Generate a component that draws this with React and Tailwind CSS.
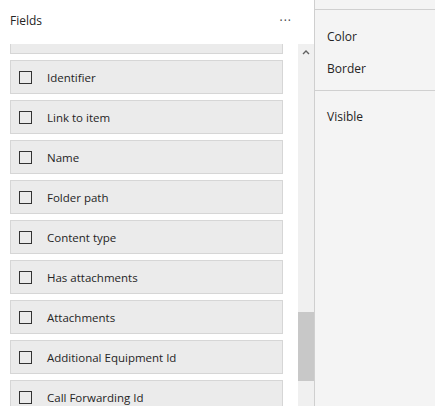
import React from 'react';

const fields = [
  '',
  'Identifier',
  'Link to item',
  'Name',
  'Folder path',
  'Content type',
  'Has attachments',
  'Attachments',
  'Additional Equipment Id',
  'Call Forwarding Id',
];

const FieldRow = ({ label }) => (
  <div className="flex items-center h-[34px] w-[273px] ml-[10px] mb-[6px] bg-[#ebebeb] border border-[#d6d6d6] shrink-0">
    <span className="w-[13px] h-[13px] border border-[#333333] ml-[8px] shrink-0" />
    <span className="ml-[15px] mt-[2px] text-[11.5px] text-[#252525] leading-none">{label}</span>
  </div>
);

const App = () => {
  return (
    <div
      className="flex w-[435px] h-[406px] bg-white overflow-hidden"
      style={{ fontFamily: '"Segoe UI", "Open Sans", "Noto Sans", sans-serif' }}
    >
      {/* Fields pane */}
      <div className="flex flex-col w-[314px] h-full">
        <div className="flex items-center justify-between h-[44px] pl-[10px] pr-[22px] pb-[2px] shrink-0">
          <span className="text-[12px] text-[#252525]">Fields</span>
          <span className="text-[12px] text-[#444] tracking-[1px]">···</span>
        </div>
        <div className="flex flex-1 min-h-0">
          <div className="w-[298px] overflow-hidden">
            <div className="flex flex-col -mt-[24px]">
              {fields.map((f, i) => (
                <FieldRow key={i} label={f} />
              ))}
            </div>
          </div>
          {/* scrollbar */}
          <div className="flex flex-col w-[16px] bg-[#f0f0f0]">
            <div className="flex justify-center pt-[5px] h-[16px]">
              <svg width="8" height="6" viewBox="0 0 8 6">
                <path d="M1 5 L4 2 L7 5" fill="none" stroke="#606060" strokeWidth="1.4" />
              </svg>
            </div>
            <div className="flex-1" />
            <div className="h-[69px] bg-[#c8c8c8]" />
            <div className="h-[25px]" />
          </div>
        </div>
      </div>
      <div className="w-px h-full bg-[#cfcfcf]" />
      {/* Properties pane */}
      <div className="flex-1 h-full bg-[#f4f4f4] flex flex-col text-[12px] text-[#252525]">
        <div className="h-[10px] border-b border-[#d0d0d0] shrink-0" />
        <div className="flex flex-col pl-[12px] pt-[18px] h-[81px] border-b border-[#d0d0d0] shrink-0">
          <span className="h-[32px]">Color</span>
          <span>Border</span>
        </div>
        <div className="pl-[12px] pt-[17px]">Visible</div>
      </div>
    </div>
  );
};

export default App;
